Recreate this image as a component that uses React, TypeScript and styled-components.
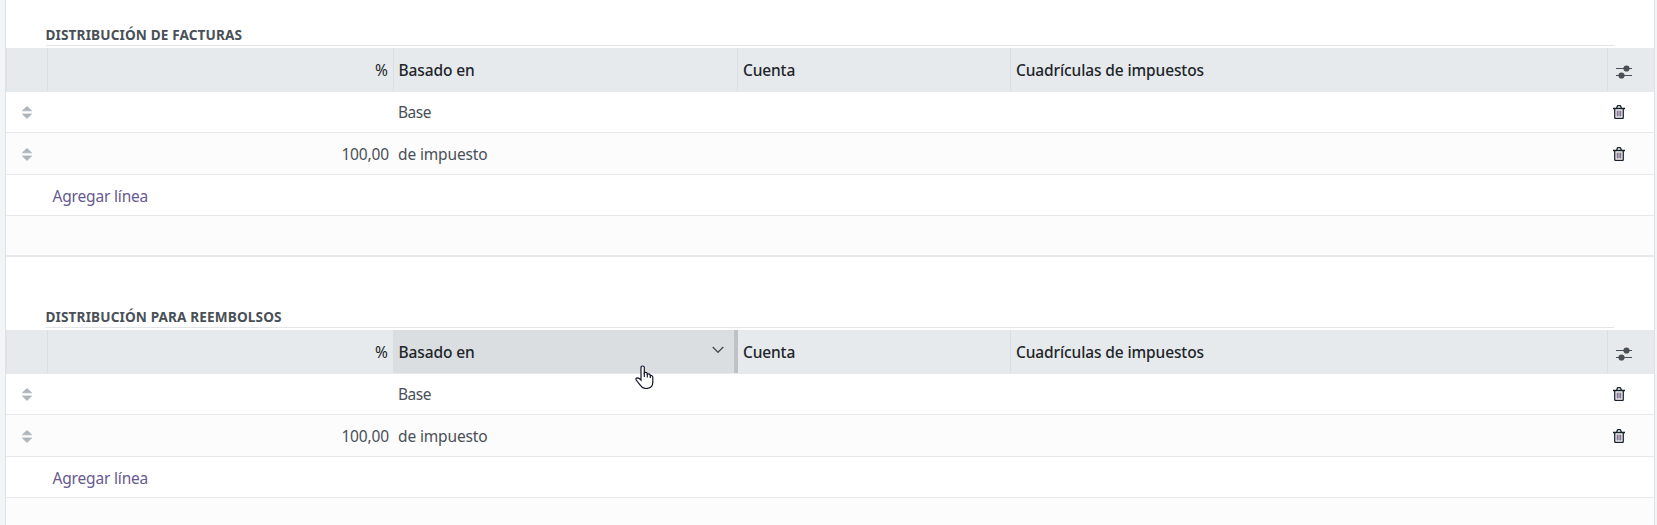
import React from 'react';
import styled, { createGlobalStyle, css } from 'styled-components';

const Global = createGlobalStyle`
  * { box-sizing: border-box; }
  body { margin: 0; background: #f3f4f6; overflow: hidden; }
  #root { height: 100vh; }
`;

const Sheet = styled.main`
  position: relative;
  height: 525px;
  margin: 0 2px 0 5px;
  padding-top: 24px;
  overflow: hidden;
  background: #fff;
  border: solid #dee2e6;
  border-width: 0 1px;
  color: #495057;
  font: 400 15.5px/24px 'Noto Sans', 'Open Sans', sans-serif;
`;

const Section = styled.section`
  height: 282px;
`;

const Title = styled.h2`
  height: 22px;
  margin: 0 40px 2px;
  border-bottom: 1px solid #e3e4e6;
  color: #495057;
  font: 700 13.6px/21px 'Noto Sans', sans-serif;
  text-indent: -0.5px;
  white-space: nowrap;
`;

const columns = css`
  display: grid;
  grid-template-columns: 42px 346px 344px 273px 597px 1fr;
`;

const HeadRow = styled.div`
  ${columns}
  height: 44px;
  background: #e7eaed;
`;

const HeadCell = styled.div<{ $right?: boolean; $hover?: boolean; $last?: boolean; $first?: boolean; $left?: number }>`
  display: flex;
  align-items: center;
  justify-content: ${p => (p.$right ? 'flex-end' : 'space-between')};
  height: 43px;
  padding: 0 5px 0 ${p => p.$left ?? 5}px;
  border-right: ${p => (p.$last ? 0 : p.$hover ? '4px solid #bec2c5' : '1px solid #dbdfe3')};
  border-left: ${p => (p.$first ? '1px solid #dee2e6' : 0)};
  background: ${p => (p.$hover ? '#dbdee1' : 'transparent')};
  color: #212529;
  font-weight: ${p => (p.$right ? 400 : 500)};
`;

const Row = styled.div<{ $h: number; $striped?: boolean; $line?: number }>`
  ${columns}
  align-items: center;
  height: ${p => p.$h}px;
  border-bottom: ${p => p.$line ?? 1}px solid #e7e9ed;
  background: ${p => (p.$striped ? '#fcfcfc' : '#fff')};
`;

const Cell = styled.div<{ $right?: boolean }>`
  padding: 0 5px 0 4px;
  text-align: ${p => (p.$right ? 'right' : 'left')};
  white-space: nowrap;
`;

const IconCell = styled.div<{ $left: number; $top?: number }>`
  display: flex;
  padding-left: ${p => p.$left}px;
  padding-top: ${p => p.$top ?? 0}px;
`;

const Text = styled.span<{ $ls?: number }>`
  letter-spacing: ${p => p.$ls ?? 0}px;
  white-space: nowrap;
`;

const AddLine = styled.a`
  grid-column: 2 / 4;
  padding: 2px 0 0 4.5px;
  color: #66598f;
`;

const Pointer = styled.svg`
  position: absolute;
  left: 629px;
  top: 365px;
`;

const MenuToggle = styled.span`
  display: flex;
  padding: 0 5px 4px 0;
`;

const Grip = () => (
  <svg width="10" height="13" viewBox="0 0 10 13" fill="#adb5bd" stroke="#adb5bd" strokeWidth=".8" strokeLinejoin="round">
    <path d="M5 .4 9.600 4.800H.4zM.4 8h9.200L5 12.500z" />
  </svg>
);

const Trash = () => (
  <svg width="12" height="14" viewBox="0 0 12 14" fill="none" stroke="#17212b">
    <path d="M0 3.500h12M1.750 3.500v9q0 1 1 1h6.500q1 0 1-1v-9M3.500 3.500l.7-2q.2-.9 1-.9h1.600q.8 0 1 .9l.7 2" strokeWidth="1.300" />
    <path d="M4.200 5.500v6M6 5.500v6M7.800 5.500v6" strokeWidth="1" stroke="#533f68" />
  </svg>
);

const Sliders = () => (
  <svg width="16" height="14" viewBox="0 0 16 14" fill="#495057">
    <path d="M0 3h16v1.100H0zM0 10h16v1.100H0z" />
    <circle cx="10.500" cy="3.500" r="3.100" />
    <circle cx="5.500" cy="10.500" r="3.100" />
  </svg>
);

const Chevron = () => (
  <svg width="12" height="8" viewBox="0 0 12 8" fill="none" stroke="#495057" strokeWidth="1.400">
    <path d="m.7 1 5.300 5.300L11.300 1" />
  </svg>
);

const Hand = () => (
  <Pointer width="19" height="24" viewBox="0 0 19 24" fill="#fff" stroke="#14172b" strokeWidth="1.200">
    <path d="M6 15V3q0-2 1.700-2T9.300 3v6V7.500q2.800-.7 3 1.500 2.700-.5 3 1.500 2.500-.3 2.500 2v4.500q0 6.500-7 6.500-3.500 0-6-3.800L1.200 15q-.8-2 1-2.200Q4 12.800 6 15z" />
    <path d="M9.300 8v4M12.300 9v3.500M15.300 10.500V13" />
  </Pointer>
);

function Distribution({ title, hover }: { title: string; hover?: boolean }) {
  return (
    <Section>
      <Title><Text $ls={0.13}>{title}</Text></Title>
      <HeadRow>
        <HeadCell $first />
        <HeadCell $right>%</HeadCell>
        <HeadCell $hover={hover} $left={4.4}><Text $ls={-0.1}>Basado en</Text>{hover && <MenuToggle><Chevron /></MenuToggle>}</HeadCell>
        <HeadCell><Text $ls={-0.14}>Cuenta</Text></HeadCell>
        <HeadCell><Text $ls={-0.12}>Cuadrículas de impuestos</Text></HeadCell>
        <HeadCell $last><IconCell $left={3} $top={4}><Sliders /></IconCell></HeadCell>
      </HeadRow>
      <Row $h={41}>
        <IconCell $left={16}><Grip /></IconCell>
        <Cell />
        <Cell><Text $ls={-0.5}>Base</Text></Cell>
        <Cell /><Cell />
        <IconCell $left={5}><Trash /></IconCell>
      </Row>
      <Row $h={42} $striped>
        <IconCell $left={16} $top={1}><Grip /></IconCell>
        <Cell $right><Text $ls={-0.15}>100,00</Text></Cell>
        <Cell><Text $ls={-0.14}>de impuesto</Text></Cell>
        <Cell /><Cell />
        <IconCell $left={5}><Trash /></IconCell>
      </Row>
      <Row $h={41}><AddLine><Text $ls={-0.18}>Agregar línea</Text></AddLine></Row>
      <Row $h={41} $striped $line={2} />
    </Section>
  );
}

export default function App() {
  return (
    <>
      <Global />
      <Sheet>
        <Distribution title="DISTRIBUCIÓN DE FACTURAS" />
        <Distribution title="DISTRIBUCIÓN PARA REEMBOLSOS" hover />
        <Hand />
      </Sheet>
    </>
  );
}
